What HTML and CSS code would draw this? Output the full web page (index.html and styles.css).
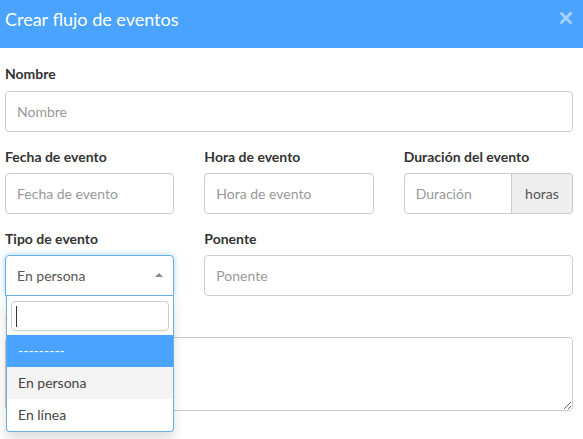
FILE: index.html
```html
<!DOCTYPE html>
<html lang="es">
<head>
<meta charset="utf-8">
<title>Crear flujo de eventos</title>
<link rel="stylesheet" href="styles.css">
</head>
<body>
<div class="modal">
  <div class="modal-header">
    <h4 class="modal-title">Crear flujo de eventos</h4>
    <span class="close" aria-label="Cerrar">
      <svg width="12" height="12" viewBox="0 0 12 12"><path d="M1.5 1.5 L10.5 10.5 M10.5 1.5 L1.5 10.5" stroke="currentColor" stroke-width="3" stroke-linecap="square"/></svg>
    </span>
  </div>
  <div class="modal-body">
    <div class="form-group">
      <label class="label">Nombre</label>
      <input class="control" type="text" placeholder="Nombre">
    </div>
    <div class="row">
      <div class="form-group">
        <label class="label">Fecha de evento</label>
        <input class="control" type="text" placeholder="Fecha de evento">
      </div>
      <div class="form-group">
        <label class="label">Hora de evento</label>
        <input class="control" type="text" placeholder="Hora de evento">
      </div>
      <div class="form-group">
        <label class="label">Duración del evento</label>
        <div class="input-group">
          <input class="control control-grouped" type="text" placeholder="Duración">
          <span class="addon">horas</span>
        </div>
      </div>
    </div>
    <div class="row">
      <div class="form-group">
        <label class="label">Tipo de evento</label>
        <div class="select-wrap">
          <div class="select-box">
            <span class="select-value">En persona</span>
            <span class="arrow"></span>
          </div>
          <div class="dropdown">
            <div class="search-box"><div class="search"><span class="caret"></span></div></div>
            <ul class="options">
              <li class="option option-active">---------</li>
              <li class="option option-selected">En persona</li>
              <li class="option">En línea</li>
            </ul>
          </div>
        </div>
      </div>
      <div class="form-group span-2">
        <label class="label">Ponente</label>
        <input class="control" type="text" placeholder="Ponente">
      </div>
    </div>
    <div class="form-group">
      <label class="label">Descripción</label>
      <textarea class="control textarea"></textarea>
    </div>
  </div>
</div>
</body>
</html>
```

FILE: styles.css
```css
* { box-sizing: border-box; }
html, body {
  margin: 0;
  padding: 0;
  background: #fff;
  font-family: "Lato", "Noto Sans", "Liberation Sans", sans-serif;
  color: #333;
}
body { min-height: 439px; }
.modal { width: 583px; min-height: 439px; }
.modal-header {
  height: 48px;
  background: #4aa3ff;
  display: flex;
  justify-content: space-between;
  align-items: flex-start;
  padding: 9px 11px 0 5px;
}
.modal-title {
  margin: 0;
  font-size: 18px;
  line-height: 20px;
  font-weight: 400;
  color: #fff;
}
.close {
  color: #a6d0ff;
  margin-top: 3px;
  display: block;
  line-height: 0;
}
.modal-body {
  padding: 16px 10px 0 5px;
}
.form-group {
  margin-bottom: 15px;
}
.label {
  display: block;
  font-size: 14px;
  line-height: 20px;
  font-weight: 700;
  color: #333;
  margin-bottom: 7px;
}
.form-group + .row .label,
.row + .row .label,
.row + .form-group .label {
  margin-bottom: 6px;
}
.control {
  display: block;
  width: 100%;
  height: 41px;
  border: 1px solid #ccc;
  border-radius: 4px;
  padding: 0 11px;
  font-family: inherit;
  font-size: 14px;
  color: #555;
  background: #fff;
  outline: none;
}
.control::placeholder { color: #999; }
.row {
  display: grid;
  grid-template-columns: repeat(3, 1fr);
  column-gap: 30px;
}
.span-2 { grid-column: span 2; }
.input-group { display: flex; }
.control-grouped {
  flex: 1;
  min-width: 0;
  border-radius: 4px 0 0 4px;
}
.addon {
  width: 61px;
  flex: none;
  height: 41px;
  display: flex;
  align-items: center;
  justify-content: center;
  background: #eee;
  border: 1px solid #ccc;
  border-left: none;
  border-radius: 0 4px 4px 0;
  font-size: 14px;
  color: #555;
}
.select-wrap { position: relative; }
.select-box {
  height: 41px;
  border: 1px solid #66afe9;
  border-radius: 4px 4px 0 0;
  box-shadow: 0 0 6px rgba(102, 175, 233, 0.55);
  display: flex;
  align-items: center;
  justify-content: space-between;
  padding: 0 10px 0 11px;
  font-size: 14px;
  color: #555;
  background: #fff;
}
.arrow {
  width: 0;
  height: 0;
  border-left: 4px solid transparent;
  border-right: 4px solid transparent;
  border-bottom: 4px solid #888;
  margin-top: -1px;
}
.dropdown {
  position: absolute;
  top: 41px;
  left: 1px;
  right: 0;
  z-index: 10;
  background: #fff;
  border: 1px solid #66afe9;
  border-top: none;
  border-radius: 0 0 4px 4px;
  box-shadow: 0 6px 12px rgba(0, 0, 0, 0.15);
}
.search-box { padding: 5px 4px 4px 4px; }
.search {
  height: 30px;
  border: 1px solid #ccc;
  border-radius: 4px;
  display: flex;
  align-items: center;
  padding-left: 4px;
}
.caret {
  width: 1px;
  height: 21px;
  background: #333;
}
.options {
  list-style: none;
  margin: 0;
  padding: 0;
}
.option {
  height: 32px;
  line-height: 32px;
  padding-left: 11px;
  font-size: 14px;
  color: #444;
}
.option-active { background: #4aa3ff; color: #fff; }
.option-selected { background: #f3f3f3; }
.textarea {
  height: 74px;
  resize: vertical;
  padding: 6px 11px;
}
```
